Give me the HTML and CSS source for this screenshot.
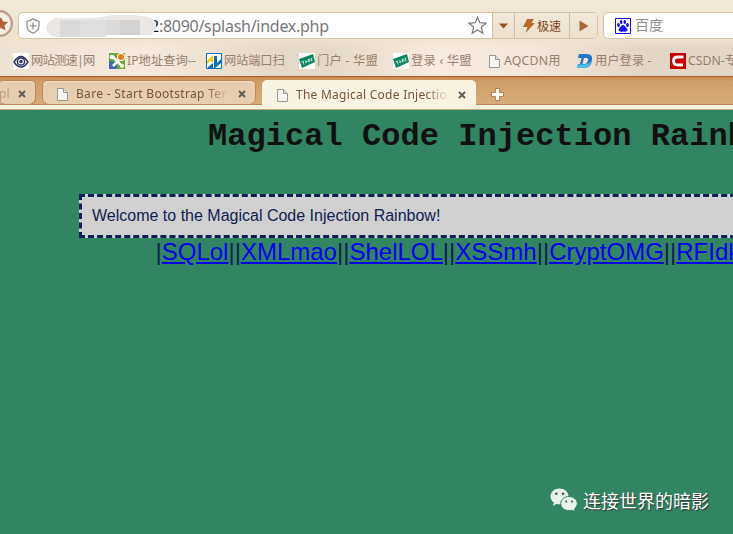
FILE: index.html
```html
<!DOCTYPE html>
<html lang="zh-CN">
<head>
<meta charset="utf-8">
<title>The Magical Code Injection Rainbow</title>
<link rel="stylesheet" href="styles.css">
</head>
<body>
<svg width="0" height="0" class="defs">
  <symbol id="page" viewBox="0 0 11 13"><path d="M.5.5h6l4 4v8H.5z" fill="#f7f5f0" stroke="#999"/><path d="M6.500.5v4h4" fill="#ddd" stroke="#999"/></symbol>
  <symbol id="close" viewBox="0 0 8 8"><path d="M1 1l6 6M7 1L1 7" stroke="#5f5a56" stroke-width="1.800"/></symbol>
  <symbol id="hm" viewBox="0 0 16 16"><path d="M0 0h16v16H0z" fill="#fff"/><path d="M0 6L14 1l2 8L3 15z" fill="#0a855f"/><path d="M2.500 9l2.500-1M4 8.500l1 3M6.500 7.500l.8 2.800M6.500 9l2-1M9 6.500l1 3M9 6.500l2-.5M9.500 8l2-.5M12 5.500l1 3M12 5.500l1.500-.5" stroke="#d8f0e6" stroke-width=".9" fill="none"/></symbol>
</svg>
<header class="toolbar">
  <div class="address-row">
    <div class="round"><svg width="13" height="16" viewBox="0 0 13 16"><path d="M3 1l2.200 4.500 5 .6-3.700 3.400 1 5L3 12l-4.500 2.500 1-5-3.700-3.400 5-.6z" fill="#b5623c"/></svg></div>
    <div class="address">
      <svg class="shield" width="14" height="16" viewBox="0 0 14 16"><path d="M7 .8Q9.500 3 13 3V8.500Q12.500 13 7 15.200 1.500 13 1 8.500V3Q4.500 3 7 .8z" fill="none" stroke="#888" stroke-width="1.200"/><path d="M7 4.500v7M3.500 8h7" stroke="#888" stroke-width="1.200"/></svg>
      <svg class="mask" width="112" height="23" viewBox="0 0 112 23"><path d="M10 3Q55 4 64 0q32-1 41 3 6 3 5 9-2 7-6 8H60l-20 2H12Q0 20 0 13 1 5 10 3z" fill="#ebe7e5"/><path d="M14 5h20v17H14zM60 5h14v15H60z" fill="#dadada"/><path d="M34 5h26v17H34z" fill="#dfdfe0"/><path d="M74 5h20v15H74z" fill="#d2d2d3"/></svg>
      <span class="url"><b>2</b>:8090/splash/index.php</span>
      <svg class="star" width="19" height="19" viewBox="0 0 19 19"><path d="M9.500 1.200l2.300 5.500 6.200.5-4.700 4 1.500 6-5.300-3.300-5.300 3.300 1.500-6-4.700-4 6.200-.5z" fill="#fff" stroke="#777" stroke-width="1.200"/></svg>
      <div class="btn arrow"><svg width="9" height="6" viewBox="0 0 9 6"><path d="M0 .5h9L4.500 5.500z" fill="#97521d"/></svg></div>
      <div class="btn speed"><svg width="12" height="14" viewBox="0 0 12 14"><path d="M4 0h7L8.500 4H12L2.500 14 4.500 8H0z" fill="#b66c28"/></svg><span>极速</span></div>
      <div class="btn go"><svg width="10" height="12" viewBox="0 0 10 12"><path d="M.5.500L9.500 6l-9 5.500z" fill="#ad6935"/></svg></div>
    </div>
    <div class="search">
      <svg width="16" height="16" viewBox="0 0 16 16"><path d="M.5.500h15v15H.5z" fill="#fff" stroke="#1010f0"/><g fill="#1010f0"><ellipse cx="3.500" cy="7" rx="1.400" ry="1.900"/><ellipse cx="6.200" cy="4" rx="1.300" ry="1.900"/><ellipse cx="9.800" cy="4" rx="1.300" ry="1.900"/><ellipse cx="12.500" cy="7" rx="1.400" ry="1.900"/><path d="M8 7q1.500 0 2.500 2 2.500 1.500 2 3.500-.8 1.500-4.500 1-3.700.5-4.500-1-.5-2 2-3.500Q6.500 7 8 7z"/></g></svg>
      <span>百度</span>
    </div>
  </div>
  <nav class="bookmarks">
    <div class="bm b1"><svg width="16" height="16" viewBox="0 0 16 16"><path d="M0 0h16v16H0z" fill="#fff"/><path d="M1 9q7-11 14 0-7 10-14 0z" fill="none" stroke="#27345f" stroke-width="1.500"/><circle cx="8" cy="8.500" r="3.600" fill="none" stroke="#27345f" stroke-width="1.500"/><circle cx="8" cy="8.500" r="1.700" fill="#27345f"/></svg><span>网站测速|网</span></div>
    <div class="bm b2"><svg width="16" height="16" viewBox="0 0 16 16"><path d="M0 0h16v16H0z" fill="#6aaa35"/><path d="M0 8l8 1v7H0z" fill="#4168b5"/><path d="M3 3l9 9M13 4l-9 9" stroke="#fff" stroke-width="2.600"/><circle cx="3" cy="4" r="2.300" fill="#fff"/><circle cx="13" cy="13" r="2" fill="#fff"/><circle cx="12" cy="4" r="4" fill="#fff"/><circle cx="12" cy="4" r="3" fill="#ef7b18"/></svg><span>IP地址查询--</span></div>
    <div class="bm b3"><svg width="16" height="16" viewBox="0 0 16 16"><path d="M.5.500h15v15H.5z" fill="#fff" stroke="#0871b9"/><path d="M1 8l6-6v7H5v-2L1 11z" fill="#f6c500"/><path d="M8 3h3v7l4-4v4l-6 5H8z" fill="#0871b9"/><path d="M2 14l5-4v5H2z" fill="#0871b9"/></svg><span>网站端口扫</span></div>
    <div class="bm b4"><svg width="16" height="16"><use href="#hm"/></svg><span>门户 - 华盟</span></div>
    <div class="bm b5"><svg width="16" height="16"><use href="#hm"/></svg><span>登录 ‹ 华盟</span></div>
    <div class="bm b6"><svg width="11" height="13"><use href="#page"/></svg><span>AQCDN用</span></div>
    <div class="bm b7"><svg width="16" height="16" viewBox="0 0 16 16"><path d="M2 1h8q6 0 5 6-1 8-8 8H0l1-4h2l1.500-6H1z" fill="#2776c9"/><path d="M0 15l1-3.500h6q4 0 7-3-1 6.500-7 6.500z" fill="#43c1e8"/><path d="M7 5h2.500q2 0 1.500 2.500T8 11H5.500z" fill="#efe5da"/></svg><span>用户登录 -</span></div>
    <div class="bm b8"><svg width="16" height="16" viewBox="0 0 16 16"><path d="M0 0h16v16H0z" fill="#c70000"/><path d="M13.500 4H8Q3.500 4 3.500 8T8 12h5" fill="none" stroke="#fff" stroke-width="2.800"/></svg><span>CSDN-专</span></div>
  </nav>
</header>
<div class="tabs">
  <div class="tab first"><span class="label">pl</span><svg class="x" width="8" height="8"><use href="#close"/></svg></div>
  <div class="tab second"><svg width="11" height="13"><use href="#page"/></svg><span class="label">Bare - Start Bootstrap Ter</span><svg class="x" width="8" height="8"><use href="#close"/></svg></div>
  <div class="tab active"><svg width="11" height="13"><use href="#page"/></svg><span class="label">The Magical Code Injectio</span><svg class="x" width="8" height="8"><use href="#close"/></svg></div>
  <svg class="plus" width="13" height="13" viewBox="0 0 13 13"><path d="M4.500.5h4v4h4v4h-4v4h-4v-4h-4v-4h4z" fill="#fbf6ef" stroke="#b9814f"/></svg>
</div>
<main class="page">
  <h1>Magical Code Injection Rainbow</h1>
  <div class="welcome">Welcome to the Magical Code Injection Rainbow!</div>
  <div class="links">|<a href="#">SQLol</a>||<a href="#">XMLmao</a>||<a href="#">ShelLOL</a>||<a href="#">XSSmh</a>||<a href="#">CryptOMG</a>||<a href="#">RFIdk</a>|</div>
  <div class="watermark">
    <svg width="28" height="25" viewBox="0 0 28 25"><g fill="#e8f2ed"><path d="M9.500.5c5 0 9 3.500 9 7.800s-4 8-9 8c-1 0-2-.1-3-.5L3 18l.8-3.500C1.500 13 .5 10.500.5 8.300.5 4 4.500.5 9.500.5z"/><path d="M19 8.500c4.600 0 8.300 3.200 8.300 7 0 2.200-1.200 4-3 5.500l.7 2.800-3.200-1.600c-.9.300-1.800.4-2.800.4-4.600 0-8.300-3.200-8.300-7.100s3.700-7 8.300-7z" stroke="#318562"/></g><g fill="#285844"><circle cx="6.300" cy="5.800" r="1.200"/><circle cx="13" cy="5.800" r="1.200"/><circle cx="16.300" cy="13.500" r="1"/><circle cx="22" cy="13.500" r="1"/></g></svg>
    <span>连接世界的暗影</span>
  </div>
</main>
</body>
</html>
```
FILE: styles.css
```css
* { box-sizing: border-box; }
body { margin: 0; width: 733px; height: 534px; overflow: hidden; display: flex; flex-direction: column; font-family: "Noto Sans", "Noto Sans CJK SC", sans-serif; }
svg { display: block; flex: none; }
.defs { position: absolute; }
.toolbar { height: 77px; flex: none; overflow: hidden; border-bottom: 1px solid #b55d23; background: linear-gradient(#f1e8d9 0, #eee3d1 38px, transparent 48px), linear-gradient(90deg, #eee2d5, #f4e9dc 20%, #e5d9ca 38%, #e5d9ca 45%, #f7ebdf 60%, #f3e7db 72%, #e3d6c7 88%, #e2d7c8); }
.address-row { display: flex; height: 39px; padding-top: 12px; }
.round { width: 27px; height: 27px; margin: -2px 5px 0 -14px; border: 2px solid #b99b82; border-radius: 50%; background: #f8f3ea; display: flex; align-items: center; padding-left: 10px; box-shadow: inset 0 0 2px #b99b82; overflow: hidden; flex: none; }
.address { width: 580px; height: 27px; flex: none; display: flex; align-items: center; background: #fff; border: 1px solid #d5c3a8; border-radius: 5px; overflow: hidden; position: relative; }
.shield { margin-left: 7px; }
.mask { position: absolute; left: 27px; top: 2px; z-index: 1; }
.url { margin-left: 110px; width: 179px; padding-top: 1px; font-size: 16px; line-height: 24px; color: #777; white-space: nowrap; letter-spacing: -.27px; }
.url b { font-weight: 400; color: #111; }
.star { margin-left: 139px; margin-right: 5px; }
.btn { height: 25px; display: flex; align-items: center; justify-content: center; background: linear-gradient(#f2e9db, #ecdfcd); border-left: 1px solid #d0bca5; flex: none; }
.arrow { width: 22px; }
.speed { width: 55px; gap: 2px; font: 12px "Noto Sans CJK SC", sans-serif; color: #824316; }
.go { width: 28px; }
.search { flex: none; margin-left: 5px; width: 150px; height: 27px; border: 1px solid #d5c3a8; border-radius: 5px; background: #fff; display: flex; align-items: center; padding-left: 11px; gap: 4px; font: 14px/20px "Noto Sans CJK SC", sans-serif; color: #8c8c8c; }
.search span { margin-top: -3px; }
.bookmarks { display: flex; padding: 12px 0 0 13px; height: 34px; }
.bm { display: flex; align-items: center; height: 20px; gap: 2px; flex: none; font: 12.3px/18px "Noto Sans", "Noto Sans CJK SC", sans-serif; color: #97806d; white-space: nowrap; }
.b1 { width: 96px; letter-spacing: -.8px; }
.b2 { width: 97px; }
.b3 { width: 93px; letter-spacing: -.2px; }
.b4 { width: 94px; letter-spacing: .2px; }
.b5 { width: 96px; letter-spacing: .2px; }
.b6 { width: 88px; gap: 4px; letter-spacing: .2px; }
.b7 { width: 93px; }
.tabs { height: 33px; flex: none; display: flex; background: linear-gradient(#c98b55 0, #cf9e69 5px, #d6ac79 27px, #bd8350 27px, #bd8350 28px, #f9f2df 28px, #f9f2df 32px, #bba979 32px); padding-top: 3px; }
.tab { height: 25px; display: flex; align-items: center; border: 1px solid #bf8755; border-radius: 5px 5px 7px 7px; background: #e5cfae; font-size: 12px; line-height: 16px; color: #7b5239; overflow: hidden; flex: none; box-shadow: inset 0 1px #f0dfc7; padding-top: 3px; }
.first { width: 37px; margin-left: -1px; border-left: 0; }
.first .label { width: 12px; opacity: .4; }
.first .x { margin-left: 7px; }
.second { width: 214px; margin-left: 6px; padding-left: 14px; }
.second .label, .active .label { margin-left: 8px; width: 153px; overflow: hidden; white-space: nowrap; -webkit-mask-image: linear-gradient(90deg, #000 85%, transparent); mask-image: linear-gradient(90deg, #000 85%, transparent); }
.second .label { letter-spacing: .32px; }
.active .label { letter-spacing: .25px; }
.x { margin-left: 9px; }
.active { width: 214px; height: 26px; margin-left: 6px; padding-left: 14px; background: #f9f3e2; border-color: #f9f3e2; border-bottom: 0; border-radius: 5px 5px 0 0; box-shadow: none; }
.plus { margin: 8px 0 0 15px; }
.page { flex: 1; position: relative; overflow: hidden; background: #318562; color: #102050; font-family: "Liberation Sans", sans-serif; }
h1 { margin: 8px 0 0 208px; font: bold 32px/38px "Courier New", "Liberation Mono", monospace; letter-spacing: .05px; color: #111; white-space: nowrap; }
.welcome { margin: 38px 0 0 79px; width: 820px; height: 44px; border: 3px dashed #102050; background: #d0d0d0; padding: 10px; font-size: 16px; line-height: 18px; }
.links { margin-left: 155.500px; font-size: 24px; line-height: 28px; white-space: nowrap; }
.links a { color: #00e; text-decoration: underline; }
.watermark { position: absolute; left: 550px; top: 376px; display: flex; align-items: center; gap: 5px; font: 18px/28px "Noto Sans CJK SC", sans-serif; color: #fff; text-shadow: 1px 1px 1px #333; white-space: nowrap; }
```
